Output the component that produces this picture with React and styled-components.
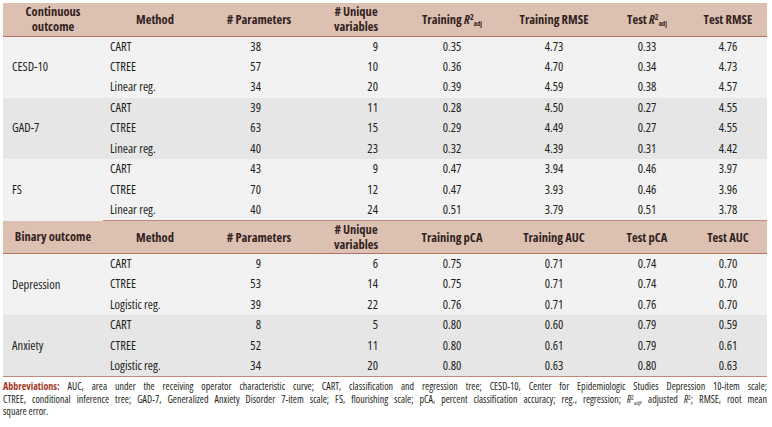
import styled, { createGlobalStyle } from 'styled-components';

const GlobalStyle = createGlobalStyle`
  body {
    margin: 0;
    background: #fff;
    font-family: "Open Sans", "Liberation Sans Narrow", sans-serif;
    font-stretch: 75%;
    color: #231f20;
  }
`;

const continuous = [
  {
    label: 'CESD-10',
    shade: 'light',
    rows: [
      ['CART', 38, 9, '0.35', '4.73', '0.33', '4.76'],
      ['CTREE', 57, 10, '0.36', '4.70', '0.34', '4.73'],
      ['Linear reg.', 34, 20, '0.39', '4.59', '0.38', '4.57'],
    ],
  },
  {
    label: 'GAD-7',
    shade: 'dark',
    rows: [
      ['CART', 39, 11, '0.28', '4.50', '0.27', '4.55'],
      ['CTREE', 63, 15, '0.29', '4.49', '0.27', '4.55'],
      ['Linear reg.', 40, 23, '0.32', '4.39', '0.31', '4.42'],
    ],
  },
  {
    label: 'FS',
    shade: 'light',
    rows: [
      ['CART', 43, 9, '0.47', '3.94', '0.46', '3.97'],
      ['CTREE', 70, 12, '0.47', '3.93', '0.46', '3.96'],
      ['Linear reg.', 40, 24, '0.51', '3.79', '0.51', '3.78'],
    ],
  },
];

const binary = [
  {
    label: 'Depression',
    shade: 'light',
    rows: [
      ['CART', 9, 6, '0.75', '0.71', '0.74', '0.70'],
      ['CTREE', 53, 14, '0.75', '0.71', '0.74', '0.70'],
      ['Logistic reg.', 39, 22, '0.76', '0.71', '0.76', '0.70'],
    ],
  },
  {
    label: 'Anxiety',
    shade: 'dark',
    rows: [
      ['CART', 8, 5, '0.80', '0.60', '0.79', '0.59'],
      ['CTREE', 52, 11, '0.80', '0.61', '0.79', '0.61'],
      ['Logistic reg.', 34, 20, '0.80', '0.63', '0.80', '0.63'],
    ],
  },
];

const RAdj = () => (
  <>
    <i>R</i>
    <Sup>2</Sup>
    <Sub>adj</Sub>
  </>
);

const Group = ({ group, ruled }) => (
  <Body $shade={group.shade}>
    {group.rows.map((r, i) => (
      <Row key={r[0]} $ruled={ruled && i === group.rows.length - 1}>
        {i === 0 && <Outcome rowSpan={3}>{group.label}</Outcome>}
        <MethodCell>{r[0]}</MethodCell>
        <CountCell $pad={50}>{r[1]}</CountCell>
        <CountCell $pad={23}>{r[2]}</CountCell>
        <Num>{r[3]}</Num>
        <Num>{r[4]}</Num>
        <Num>{r[5]}</Num>
        <Num>{r[6]}</Num>
      </Row>
    ))}
  </Body>
);

const App = () => (
  <Page>
    <GlobalStyle />
    <Table>
      <colgroup>
        <col style={{ width: 100 }} />
        <col style={{ width: 104 }} />
        <col style={{ width: 104 }} />
        <col style={{ width: 90 }} />
        <col style={{ width: 102 }} />
        <col style={{ width: 102 }} />
        <col style={{ width: 84 }} />
        <col style={{ width: 78 }} />
      </colgroup>
      <thead>
        <HeadRow>
          <Th>Continuous<br />outcome</Th>
          <Th>Method</Th>
          <Th># Parameters</Th>
          <Th># Unique<br />variables</Th>
          <Th>Training <RAdj /></Th>
          <Th>Training RMSE</Th>
          <Th>Test <RAdj /></Th>
          <Th>Test RMSE</Th>
        </HeadRow>
      </thead>
      {continuous.map((g, i) => (
        <Group key={g.label} group={g} ruled={i === continuous.length - 1} />
      ))}
      <tbody>
        <HeadRow>
          <Th>Binary outcome</Th>
          <Th>Method</Th>
          <Th># Parameters</Th>
          <Th># Unique<br />variables</Th>
          <Th>Training pCA</Th>
          <Th>Training AUC</Th>
          <Th>Test pCA</Th>
          <Th>Test AUC</Th>
        </HeadRow>
      </tbody>
      {binary.map(g => (
        <Group key={g.label} group={g} />
      ))}
    </Table>
    <Note>
      <NoteLine>
        <Label>Abbreviations:</Label> AUC, area under the receiving operator characteristic curve; CART, classification and regression tree; CESD-10, Center for Epidemiologic Studies Depression 10-item scale;
      </NoteLine>
      <NoteLine>
        CTREE, conditional inference tree; GAD-7, Generalized Anxiety Disorder 7-item scale; FS, flourishing scale; pCA, percent classification accuracy; reg., regression; <RAdj />, adjusted <i>R</i><Sup>2</Sup>; RMSE, root mean
      </NoteLine>
      <NoteLine $last>square error.</NoteLine>
    </Note>
  </Page>
);

export default App;

const Page = styled.div`
  width: 764px;
  padding: 3px 5px 0 3px;
`;

const Table = styled.table`
  width: 764px;
  table-layout: fixed;
  border-collapse: collapse;
  font-size: 12.5px;
  border-bottom: 1px solid #c08a78;
`;

const HeadRow = styled.tr`
  height: 33px;
  background: #dcc1b3;
  border-bottom: 1px solid #b5735f;
`;

const Th = styled.th`
  padding: 0 4px;
  font-weight: bold;
  text-align: center;
  line-height: 15px;
  color: #33231e;
  vertical-align: middle;
`;

const Sup = styled.sup`
  font-size: 0.65em;
  vertical-align: 0.45em;
  line-height: 0;
`;

const Sub = styled.sub`
  font-size: 0.55em;
  vertical-align: -0.3em;
  line-height: 0;
`;

const Body = styled.tbody`
  background: ${p => (p.$shade === 'dark' ? '#e6e6e6' : '#f2f2f2')};
`;

const Row = styled.tr`
  height: 20.5px;

  td {
    border-bottom: ${p => (p.$ruled ? '1px solid #c08a78' : 'none')};
  }
`;

const Cell = styled.td`
  padding: 0;
  line-height: 14px;
  vertical-align: middle;
`;

const Outcome = styled(Cell)`
  padding-left: 9px;
  border-bottom: none !important;
`;

const MethodCell = styled(Cell)`
  padding-left: 7px;
`;

const CountCell = styled(Cell)`
  text-align: right;
  padding-right: ${p => p.$pad}px;
`;

const Num = styled(Cell)`
  text-align: center;
`;

const Note = styled.div`
  margin-top: 3px;
  font-size: 10px;
  line-height: 12.5px;
`;

const NoteLine = styled.span`
  display: block;
  text-align: justify;
  text-align-last: ${p => (p.$last ? 'left' : 'justify')};
  white-space: nowrap;
`;

const Label = styled.b`
  color: #a4391f;
`;
